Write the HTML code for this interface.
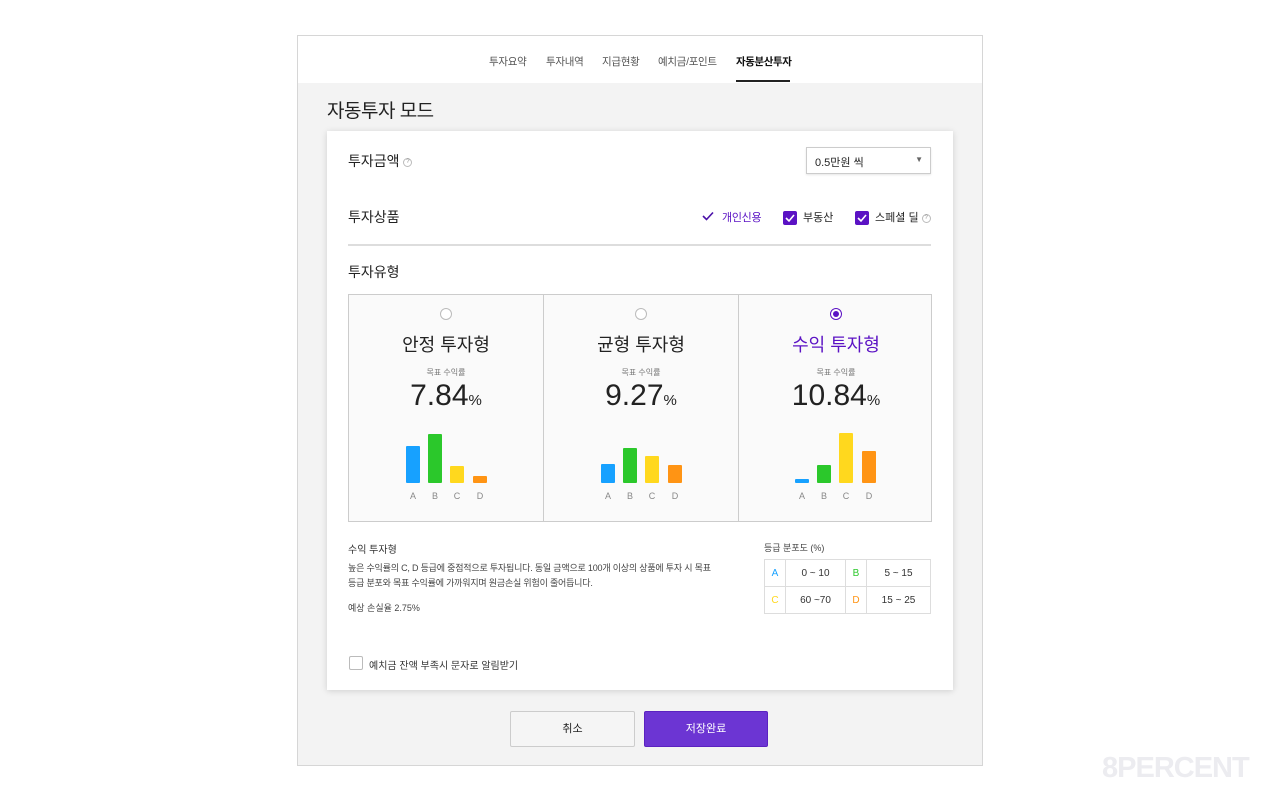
<!DOCTYPE html>
<html><head><meta charset="utf-8">
<style>
*{margin:0;padding:0;box-sizing:border-box}
body{width:1280px;height:801px;background:#fff;position:relative;font-family:"Liberation Sans","Noto Sans CJK KR",sans-serif;color:#222;overflow:hidden}
.a{position:absolute;white-space:nowrap}
.frame{position:absolute;left:297px;top:35px;width:686px;height:731px;border:1px solid #d6d6d6;background:#f3f3f3}
.hdr{position:absolute;left:0;top:0;width:684px;height:47px;background:#fff}
.card{position:absolute;left:327px;top:131px;width:626px;height:559px;background:#fff;box-shadow:0 1px 6px rgba(0,0,0,.15)}
.q{display:inline-block;width:9px;height:9px;border:1px solid #bbb;border-radius:50%;font-size:6px;line-height:7px;text-align:center;color:#888;vertical-align:middle}
.cb{display:inline-block;width:14px;height:14px;background:#5b12c4;border-radius:2px;vertical-align:middle;position:relative;margin-right:3px}
.box{position:absolute;top:294px;height:228px;background:#fafafa;border:1px solid #ccc}
.bar{position:absolute;width:14px;border-radius:1px}
.lbl{position:absolute;font-size:9px;color:#888;top:491px;width:14px;text-align:center}
td{border:1px solid #ddd;height:27px;text-align:center;font-size:10px;color:#333}
</style></head><body>
<div class="frame">
 <div class="hdr"></div>
</div>
<div class="a" style="left:489px;top:54px;font-size:10.5px;color:#555;letter-spacing:-0.3px">투자요약</div>
<div class="a" style="left:546px;top:54px;font-size:10.5px;color:#555;letter-spacing:-0.3px">투자내역</div>
<div class="a" style="left:602px;top:54px;font-size:10.5px;color:#555;letter-spacing:-0.3px">지급현황</div>
<div class="a" style="left:658px;top:54px;font-size:10.5px;color:#555;letter-spacing:-0.3px">예치금/포인트</div>
<div class="a" style="left:736px;top:54px;font-size:10.5px;color:#111;font-weight:bold;letter-spacing:-0.4px">자동분산투자</div>
<div class="a" style="left:736px;top:80px;width:54px;height:2px;background:#222"></div>
<div class="a" style="left:327px;top:96px;font-size:19px;color:#222;letter-spacing:-0.5px">자동투자 모드</div>

<div class="card"></div>
<div class="a" style="left:348px;top:151px;font-size:14px">투자금액 <span class="q">?</span></div>
<div class="a" style="left:806px;top:147px;width:125px;height:27px;border:1px solid #ccc;box-shadow:0 1px 2px rgba(0,0,0,.1);font-size:11px;padding:6px 8px">0.5만원 씩<span style="position:absolute;right:7px;top:7px;font-size:8px;color:#666">▼</span></div>
<div class="a" style="left:348px;top:207px;font-size:14px">투자상품</div>
<svg class="a" style="left:702px;top:211px" width="12" height="10"><path d="M1 5l3.5 3.5L11 1.5" stroke="#4a10a8" stroke-width="1.6" fill="none"/></svg>
<div class="a" style="left:722px;top:209px;font-size:11px;color:#5b12c4;letter-spacing:-0.3px">개인신용</div>
<div class="a" style="left:783px;top:209px;font-size:11px"><span class="cb"><svg width="14" height="14" style="position:absolute;left:0;top:0"><path d="M3 7l3 3 5-6" stroke="#fff" stroke-width="1.6" fill="none"/></svg></span> 부동산</div>
<div class="a" style="left:855px;top:209px;font-size:11px"><span class="cb"><svg width="14" height="14" style="position:absolute;left:0;top:0"><path d="M3 7l3 3 5-6" stroke="#fff" stroke-width="1.6" fill="none"/></svg></span> 스페셜 딜 <span class="q">?</span></div>
<div class="a" style="left:348px;top:244px;width:583px;height:2px;background:#ddd"></div>
<div class="a" style="left:348px;top:262px;font-size:14px">투자유형</div>

<div class="box" style="left:348px;width:196px"></div>
<div class="box" style="left:543px;width:196px"></div>
<div class="box" style="left:738px;width:194px"></div>

<div class="a" style="left:440px;top:308px;width:12px;height:12px;border:1px solid #bbb;border-radius:50%;background:#fff"></div>
<div class="a" style="left:348px;top:331px;width:196px;text-align:center;font-size:18px">안정 투자형</div>
<div class="a" style="left:348px;top:367px;width:196px;text-align:center;font-size:8px;color:#777">목표 수익률</div>
<div class="a" style="left:348px;top:379px;width:196px;text-align:center;font-size:30px;color:#222">7.84<span style="font-size:15px">%</span></div>
<div class="a" style="left:635px;top:308px;width:12px;height:12px;border:1px solid #bbb;border-radius:50%;background:#fff"></div>
<div class="a" style="left:543px;top:331px;width:196px;text-align:center;font-size:18px">균형 투자형</div>
<div class="a" style="left:543px;top:367px;width:196px;text-align:center;font-size:8px;color:#777">목표 수익률</div>
<div class="a" style="left:543px;top:379px;width:196px;text-align:center;font-size:30px;color:#222">9.27<span style="font-size:15px">%</span></div>
<div class="a" style="left:830px;top:308px;width:12px;height:12px;border:1px solid #5b12c4;border-radius:50%;background:#fff"><div style="position:absolute;left:2px;top:2px;width:6px;height:6px;border-radius:50%;background:#5b12c4"></div></div>
<div class="a" style="left:738px;top:331px;width:196px;text-align:center;font-size:18px;color:#5b12c4">수익 투자형</div>
<div class="a" style="left:738px;top:367px;width:196px;text-align:center;font-size:8px;color:#777">목표 수익률</div>
<div class="a" style="left:738px;top:379px;width:196px;text-align:center;font-size:30px;color:#222">10.84<span style="font-size:15px">%</span></div>

<div class="bar" style="left:406px;top:446px;height:37px;background:#17a1ff"></div>
<div class="bar" style="left:428px;top:434px;height:49px;background:#2bc82b"></div>
<div class="bar" style="left:450px;top:466px;height:17px;background:#ffd81e"></div>
<div class="bar" style="left:473px;top:476px;height:7px;background:#ff9414"></div>
<div class="lbl" style="left:406px">A</div><div class="lbl" style="left:428px">B</div><div class="lbl" style="left:450px">C</div><div class="lbl" style="left:473px">D</div>

<div class="bar" style="left:601px;top:464px;height:19px;background:#17a1ff"></div>
<div class="bar" style="left:623px;top:448px;height:35px;background:#2bc82b"></div>
<div class="bar" style="left:645px;top:456px;height:27px;background:#ffd81e"></div>
<div class="bar" style="left:668px;top:465px;height:18px;background:#ff9414"></div>
<div class="lbl" style="left:601px">A</div><div class="lbl" style="left:623px">B</div><div class="lbl" style="left:645px">C</div><div class="lbl" style="left:668px">D</div>

<div class="bar" style="left:795px;top:479px;height:4px;background:#17a1ff"></div>
<div class="bar" style="left:817px;top:465px;height:18px;background:#2bc82b"></div>
<div class="bar" style="left:839px;top:433px;height:50px;background:#ffd81e"></div>
<div class="bar" style="left:862px;top:451px;height:32px;background:#ff9414"></div>
<div class="lbl" style="left:795px">A</div><div class="lbl" style="left:817px">B</div><div class="lbl" style="left:839px">C</div><div class="lbl" style="left:862px">D</div>

<div class="a" style="left:348px;top:541px;font-size:10px;color:#333">수익 투자형</div>
<div class="a" style="left:348px;top:561px;font-size:9px;color:#444;line-height:15px;letter-spacing:-0.2px">높은 수익률의 C, D 등급에 중점적으로 투자됩니다. 동일 금액으로 100개 이상의 상품에 투자 시 목표<br>등급 분포와 목표 수익률에 가까워지며 원금손실 위험이 줄어듭니다.</div>
<div class="a" style="left:348px;top:601px;font-size:9px;color:#444">예상 손실율 2.75%</div>
<div class="a" style="left:764px;top:541px;font-size:9px;color:#444">등급 분포도 (%)</div>
<table class="a" style="left:764px;top:559px;width:167px;border-collapse:collapse">
<tr><td style="width:21px;color:#17a1ff">A</td><td style="width:60px">0 ~ 10</td><td style="width:21px;color:#2bc82b">B</td><td>5 ~ 15</td></tr>
<tr><td style="color:#ffd81e">C</td><td>60 ~70</td><td style="color:#ff9414">D</td><td>15 ~ 25</td></tr>
</table>
<div class="a" style="left:349px;top:656px;width:14px;height:14px;border:1px solid #bbb;border-radius:2px"></div>
<div class="a" style="left:369px;top:657px;font-size:10px;color:#333">예치금 잔액 부족시 문자로 알림받기</div>

<div class="a" style="left:510px;top:711px;width:125px;height:36px;border:1px solid #ccc;border-radius:2px;background:#f5f5f5;text-align:center;line-height:34px;font-size:11px">취소</div>
<div class="a" style="left:644px;top:711px;width:124px;height:36px;border-radius:2px;background:#6c35d3;border:1px solid #5b22c0;text-align:center;line-height:34px;font-size:11px;color:#fff">저장완료</div>

<div class="a" style="left:1102px;top:752px;font-size:29px;font-weight:bold;color:#ececf0;letter-spacing:-1px">8PERCENT</div>
</body></html>
